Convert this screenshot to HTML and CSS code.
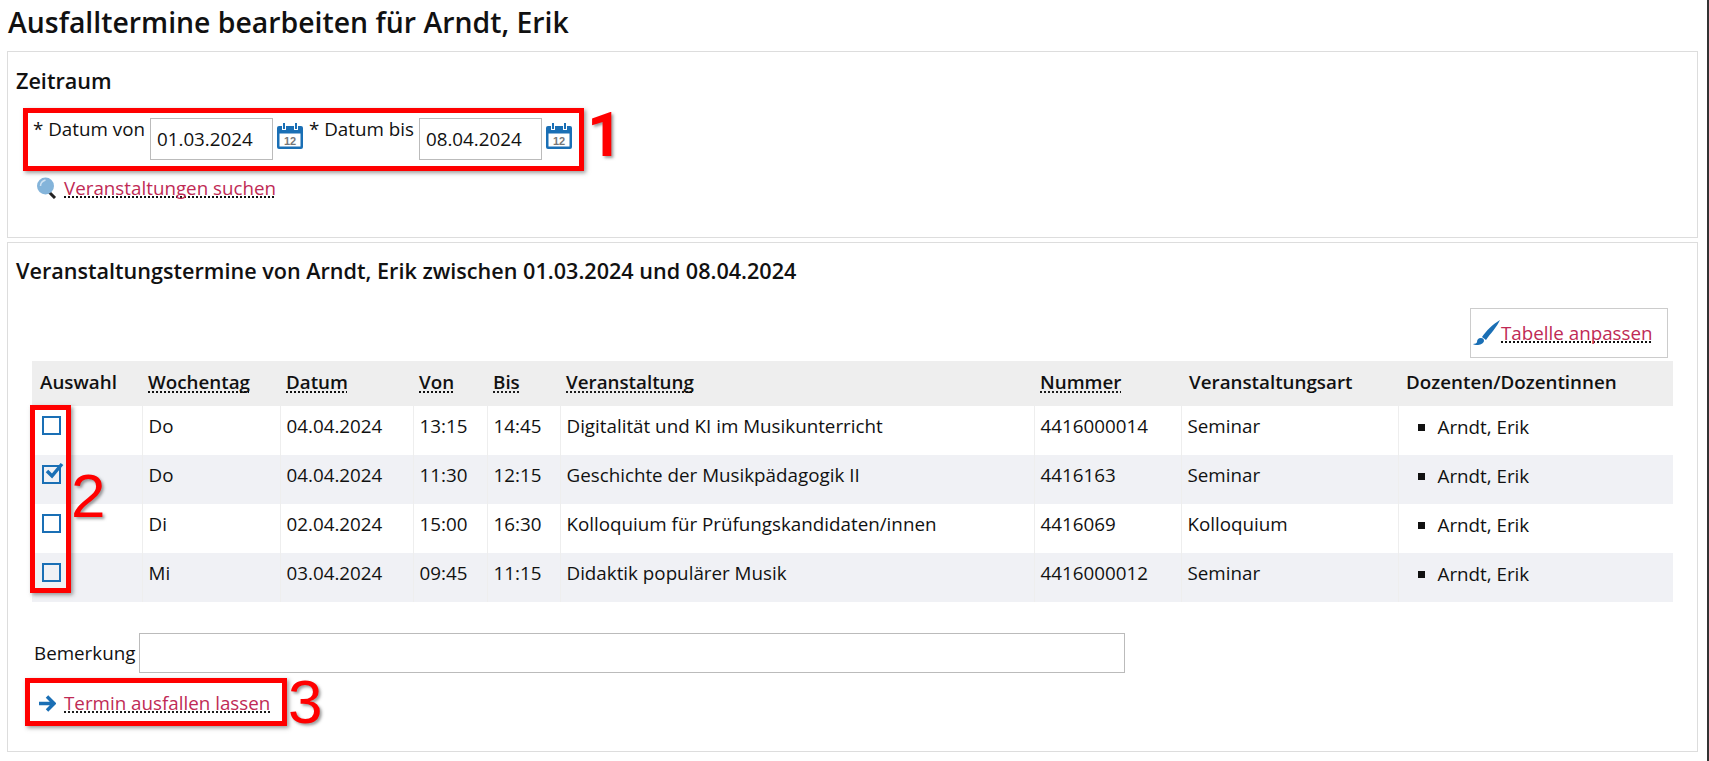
FILE: index.html
```html
<!DOCTYPE html>
<html lang="de">
<head>
    <meta charset="UTF-8">
    <title>Ausfalltermine bearbeiten</title>
    <link rel="stylesheet" href="styles.css">
</head>
<body>
    <div class="page">
        <h1>Ausfalltermine bearbeiten für Arndt, Erik</h1>

        <div class="panel panel-range">
            <h2>Zeitraum</h2>
            <div class="date-row">
                <label>* Datum von</label>
                <input class="date-input" type="text" value="01.03.2024">
                <svg class="cal-icon" viewBox="0 0 26 26"><use href="#cal"></use></svg>
                <label class="label-to">* Datum bis</label>
                <input class="date-input" type="text" value="08.04.2024">
                <svg class="cal-icon" viewBox="0 0 26 26"><use href="#cal"></use></svg>
            </div>
            <div class="search-row">
                <svg class="search-icon" viewBox="0 0 20 22">
                    <path d="M12 15l6 6" stroke="#222" stroke-width="3" fill="none"/>
                    <circle cx="8.500" cy="9" r="8.500" fill="#84b4da"/>
                    <path d="M3.500 9c0-3 2-5 5-6" stroke="#cfe2f2" stroke-width="1.500" fill="none"/>
                </svg>
                <a class="link" href="#">Veranstaltungen suchen</a>
            </div>
        </div>

        <div class="panel panel-dates">
            <h2>Veranstaltungstermine von Arndt, Erik zwischen 01.03.2024 und 08.04.2024</h2>
            <div class="table-tools">
                <div class="tool-btn">
                    <svg class="brush-icon" viewBox="0 0 28 26">
                        <path d="M27 0c-7 4-14 11-18 17l4 3c4-6 11-13 14-20z" fill="#1a6fb5"/>
                        <path d="M8 18c-3 0-4 2-4 4 0 1-2 2-4 2 3 2 10 1 11-3 0-2-1-3-3-3z" fill="#1a6fb5"/>
                    </svg>
                    <a class="link" href="#">Tabelle anpassen</a>
                </div>
            </div>
            <table class="dates">
                <colgroup>
                    <col class="c-sel"><col class="c-day"><col class="c-date"><col class="c-from"><col class="c-to">
                    <col class="c-name"><col class="c-num"><col class="c-type"><col class="c-doz">
                </colgroup>
                <thead>
                    <tr>
                        <th class="th-wide">Auswahl</th>
                        <th><span class="abbr">Wochentag</span></th>
                        <th><span class="abbr">Datum</span></th>
                        <th><span class="abbr">Von</span></th>
                        <th><span class="abbr">Bis</span></th>
                        <th><span class="abbr">Veranstaltung</span></th>
                        <th><span class="abbr">Nummer</span></th>
                        <th class="th-wide">Veranstaltungsart</th>
                        <th class="th-wide">Dozenten/Dozentinnen</th>
                    </tr>
                </thead>
                <tbody>
                    <tr>
                        <td><span class="check"></span></td>
                        <td>Do</td><td>04.04.2024</td><td>13:15</td><td>14:45</td>
                        <td>Digitalität und KI im Musikunterricht</td><td>4416000014</td><td>Seminar</td>
                        <td class="td-people"><ul><li>Arndt, Erik</li></ul></td>
                    </tr>
                    <tr>
                        <td>
                            <span class="check">
                                <svg class="tick" viewBox="0 0 20 18"><path d="M3 9l5 5L18 2" stroke="#1a6fb5" stroke-width="3.500" fill="none"/></svg>
                            </span>
                        </td>
                        <td>Do</td><td>04.04.2024</td><td>11:30</td><td>12:15</td>
                        <td>Geschichte der Musikpädagogik II</td><td>4416163</td><td>Seminar</td>
                        <td class="td-people"><ul><li>Arndt, Erik</li></ul></td>
                    </tr>
                    <tr>
                        <td><span class="check"></span></td>
                        <td>Di</td><td>02.04.2024</td><td>15:00</td><td>16:30</td>
                        <td>Kolloquium für Prüfungskandidaten/innen</td><td>4416069</td><td>Kolloquium</td>
                        <td class="td-people"><ul><li>Arndt, Erik</li></ul></td>
                    </tr>
                    <tr>
                        <td><span class="check"></span></td>
                        <td>Mi</td><td>03.04.2024</td><td>09:45</td><td>11:15</td>
                        <td>Didaktik populärer Musik</td><td>4416000012</td><td>Seminar</td>
                        <td class="td-people"><ul><li>Arndt, Erik</li></ul></td>
                    </tr>
                </tbody>
            </table>
            <div class="remark-row">
                <label>Bemerkung</label>
                <input class="remark-input" type="text">
            </div>
            <div class="submit-row">
                <svg class="arrow-icon" viewBox="0 0 17 17">
                    <path d="M0 8.500h13M8 1.500l7 7-7 7" stroke="#1a6fb5" stroke-width="3.500" fill="none"/>
                </svg>
                <a class="link" href="#">Termin ausfallen lassen</a>
            </div>
        </div>
    </div>

    <!-- annotations on top of the screenshot -->
    <div class="mark mark-1"></div>
    <div class="mark mark-2"></div>
    <div class="mark mark-3"></div>
    <div class="num num-1">1</div>
    <div class="num num-2">2</div>
    <div class="num num-3">3</div>

    <svg class="defs" width="0" height="0">
        <symbol id="cal" viewBox="0 0 26 26">
            <rect x="0" y="3" width="26" height="23" rx="2" fill="#1a6fb5"/>
            <path d="M2.500 10.500h21v13h-21z" fill="#fff"/>
            <path d="M7 0v7M19 0v7" stroke="#fff" stroke-width="4"/>
            <path d="M7 0v6M19 0v6" stroke="#1a6fb5" stroke-width="2"/>
            <text x="13" y="21.500" font-family="Liberation Sans" font-size="11" font-weight="700" fill="#777" text-anchor="middle">12</text>
        </symbol>
    </svg>
</body>
</html>
```

FILE: styles.css
```css
body {
    margin: 0;
    font-family: "Open Sans", Arial, sans-serif;
    font-size: 18.8px;
    color: #111;
    background-color: #fff;
    overflow: hidden;
}
.page {
    width: 1691px;
    height: 761px;
    padding: 0 9px 0 7px;
    border-right: 2px solid #333;
}
h1 {
    margin: 0;
    height: 51px;
    padding-left: 1px;
    box-sizing: border-box;
    font-size: 28.4px;
    font-weight: 600;
    line-height: 44px;
}
h2 {
    margin: 0 0 0 1px;
    font-size: 21.6px;
    font-weight: 600;
}
.panel {
    border: 1px solid #ddd;
    box-sizing: border-box;
    padding: 0 7px;
}
.panel-range {
    height: 187px;
    margin-bottom: 4px;
}
.panel-range h2 {
    padding-top: 14px;
    line-height: 30px;
}
.panel-dates {
    height: 510px;
}
.panel-dates h2 {
    padding-top: 15px;
    line-height: 26px;
}
.date-row {
    display: flex;
    align-items: flex-start;
    padding: 22px 0 0 18px;
}
.date-row label {
    line-height: 24px;
    margin: -1px 5px 0 0;
}
.date-row .label-to {
    margin-left: 6px;
}
.date-input {
    box-sizing: border-box;
    width: 123px;
    height: 42px;
    padding: 0 0 0 6px;
    border: 1px solid #bbb;
    font: inherit;
    color: #111;
    outline: none;
}
.cal-icon {
    width: 26px;
    height: 26px;
    margin: 5px 0 0 4px;
}
.search-row {
    display: flex;
    align-items: center;
    padding: 15px 0 0 22px;
    gap: 7px;
}
.search-icon {
    width: 20px;
    height: 22px;
}
.link {
    color: #c02a55;
    text-decoration: underline dotted #111;
    text-decoration-skip-ink: none;
    text-underline-offset: 2px;
}
.table-tools {
    display: flex;
    justify-content: flex-end;
    height: 77px;
    box-sizing: border-box;
    padding-top: 24px;
    margin-right: 22px;
}
.tool-btn {
    display: flex;
    align-items: center;
    box-sizing: border-box;
    width: 198px;
    height: 50px;
    padding-left: 2px;
    border: 1px solid #ccc;
}
.brush-icon {
    width: 28px;
    height: 26px;
}
.dates {
    width: 1641px;
    margin-left: 17px;
    border-collapse: collapse;
    table-layout: fixed;
}
.c-sel { width: 110px; }
.c-day { width: 138px; }
.c-date { width: 133px; }
.c-from { width: 74px; }
.c-to { width: 73px; }
.c-name { width: 474px; }
.c-num { width: 147px; }
.c-type { width: 217px; }
.c-doz { width: 275px; }
.dates th {
    background-color: #eee;
    height: 41px;
    padding: 0 0 4px 6px;
    text-align: left;
    font-weight: 600;
}
.dates .th-wide {
    padding-left: 8px;
}
.dates td {
    height: 40px;
    padding: 0 0 9px 6px;
    border-left: 1px solid #eee;
}
.dates td:first-child {
    border-left: 0;
    padding: 0;
}
.dates .td-people {
    height: 42px;
    padding-bottom: 7px;
}
.dates tbody tr:nth-child(even) td {
    background-color: #f0f1f5;
}
.abbr {
    text-decoration: underline dotted #111;
    text-decoration-skip-ink: none;
    text-underline-offset: 3px;
}
.check {
    display: block;
    position: relative;
    box-sizing: border-box;
    width: 19px;
    height: 19px;
    margin: 0 0 10px 10px;
    border: 2px solid #1a6fb5;
}
.tick {
    position: absolute;
    left: 0;
    top: -5px;
    width: 20px;
    height: 18px;
}
.dates ul {
    margin: 0;
    padding: 0 0 0 33px;
    list-style: square;
}
.remark-row {
    display: flex;
    align-items: center;
    gap: 4px;
    padding: 31px 0 0 19px;
}
.remark-input {
    width: 986px;
    height: 40px;
    box-sizing: border-box;
    border: 1px solid #bbb;
    outline: none;
}
.submit-row {
    display: flex;
    align-items: center;
    gap: 8px;
    padding: 17px 0 0 24px;
}
.arrow-icon {
    width: 17px;
    height: 17px;
}
.defs {
    position: absolute;
}
.mark {
    position: absolute;
    border: 5px solid #f00;
    box-sizing: border-box;
    box-shadow: 2px 2px 4px rgba(60, 60, 60, 0.5);
}
.mark-1 { left: 23px; top: 108px; width: 561px; height: 63px; }
.mark-2 { left: 30px; top: 405px; width: 41px; height: 188px; }
.mark-3 { left: 25px; top: 678px; width: 262px; height: 48px; }
.num {
    position: absolute;
    font-family: "Liberation Sans", Arial, sans-serif;
    font-size: 62px;
    line-height: 62px;
    color: #f00;
    text-shadow: 2px 2px 3px rgba(60, 60, 60, 0.5);
}
.num-1 { left: 587px; top: 104px; font-family: Roboto, Arial, sans-serif; font-weight: 700; }
.num-2 { left: 71px; top: 465px; }
.num-3 { left: 288px; top: 671px; }
```
